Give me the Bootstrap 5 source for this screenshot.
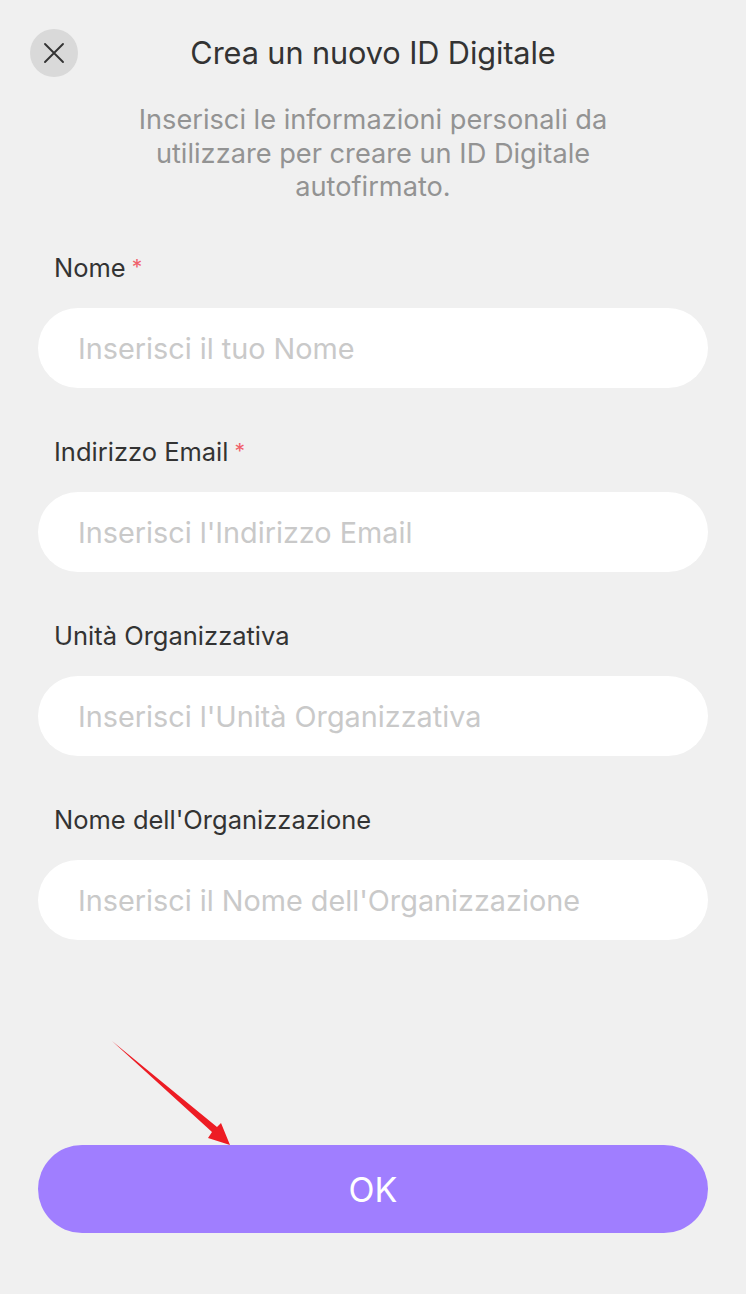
<!DOCTYPE html>
<html lang="it"><head><meta charset="utf-8"><title>Crea un nuovo ID Digitale</title>
<link href="https://cdn.jsdelivr.net/npm/bootstrap@5.3.0/dist/css/bootstrap.min.css" rel="stylesheet">
<style>
html,body{height:100%}
body{background:#f0f0f0;font-family:Inter,"Noto Sans",sans-serif;color:#333;overflow:hidden}
.screen{height:1294px;padding:29px 38px 61px}
.closer{width:48px;height:48px;background:#d9d9d9;border:0;border-radius:50%;margin-left:-8px;flex:none}
.balance{width:40px;flex:none}
.top-title{font-size:30.7px;font-weight:400;line-height:48px;margin:0;color:#333;letter-spacing:-.1px}
.subtitle{font-size:27.2px;line-height:33.5px;color:#939393;text-align:center;margin:26px 60px 0}
.fieldset{margin-top:48px;gap:48px}
.lab{font-size:25.5px;line-height:32px;margin:0 0 24px 16px;color:#333}
.req{color:#f0606a;margin-left:6px;font-size:21px;vertical-align:2px}
.pill{height:80px;border-radius:40px;border:0;font-size:28.8px;padding:2px 40px 0;background:#fff;box-shadow:none}
.pill::placeholder{color:#c9c9c9}
.ok-btn{height:88px;border-radius:44px;background:#a07eff;border:0;color:#fff;font-size:34px;width:100%}
.arrow{position:absolute;left:100px;top:1030px}
</style></head><body>
<div class="screen d-flex flex-column position-relative">
<div class="d-flex align-items-center"><button class="closer d-flex align-items-center justify-content-center" aria-label="Chiudi"><svg width="22" height="22" viewBox="0 0 22 22"><path d="M2 2 20 20M20 2 2 20" stroke="#333" stroke-width="1.9" stroke-linecap="round"/></svg></button>
<h1 class="top-title flex-grow-1 text-center">Crea un nuovo ID Digitale</h1><span class="balance"></span></div>
<p class="subtitle">Inserisci le informazioni personali da utilizzare per creare un ID Digitale autofirmato.</p>
<form class="fieldset d-flex flex-column flex-grow-1">
<div><label class="lab d-block">Nome<span class="req">*</span></label><input class="form-control pill" placeholder="Inserisci il tuo Nome"></div>
<div><label class="lab d-block">Indirizzo Email<span class="req">*</span></label><input class="form-control pill" placeholder="Inserisci l'Indirizzo Email"></div>
<div><label class="lab d-block">Unità Organizzativa</label><input class="form-control pill" placeholder="Inserisci l'Unità Organizzativa"></div>
<div><label class="lab d-block">Nome dell'Organizzazione</label><input class="form-control pill" placeholder="Inserisci il Nome dell'Organizzazione"></div>
<button type="button" class="btn ok-btn mt-auto">OK</button>
</form>
<svg class="arrow" width="140" height="120" viewBox="100 1030 140 120"><path d="M112 1041 217 1127 221 1123 230 1145 208 1138 212 1132Z" fill="#ed1c24"/></svg>
</div>
<script src="https://cdn.jsdelivr.net/npm/bootstrap@5.3.0/dist/js/bootstrap.bundle.min.js"></script>
</body></html>
